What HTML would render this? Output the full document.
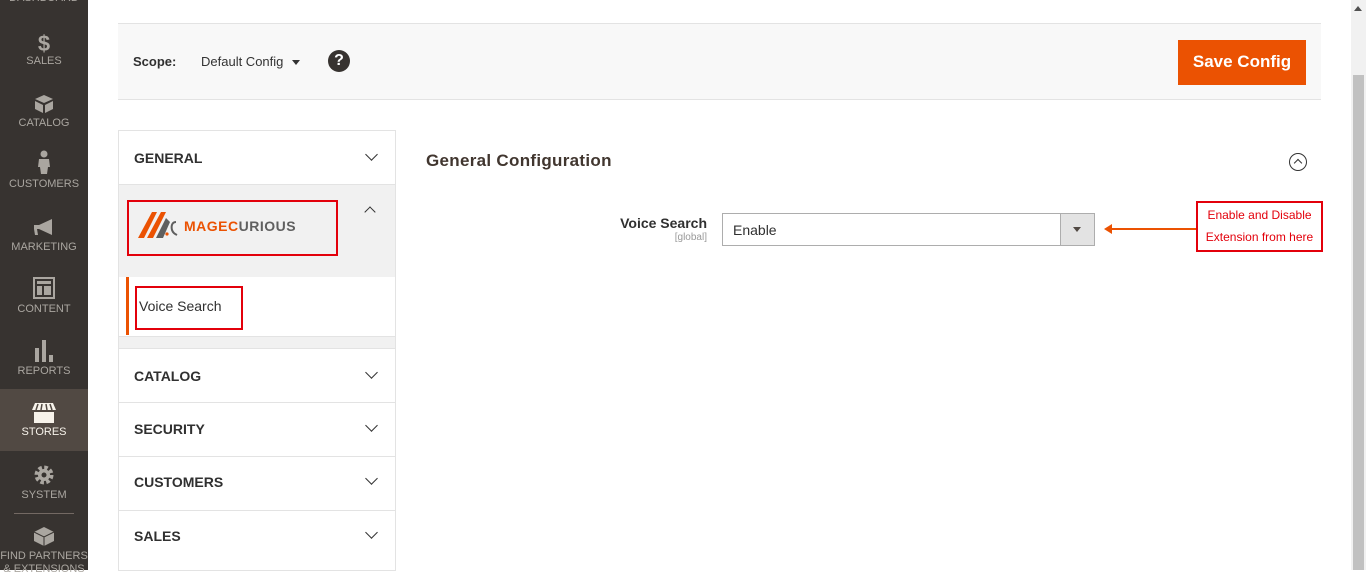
<!DOCTYPE html>
<html><head><meta charset="utf-8"><style>
*{box-sizing:border-box;margin:0;padding:0}
body{width:1366px;height:570px;overflow:hidden;background:#fff;font-family:"Liberation Sans",sans-serif;position:relative;color:#303030}
.side{position:absolute;left:0;top:0;width:88px;height:570px;background:#373330}
.it{position:absolute;left:0;width:88px;text-align:center;color:#aaa6a0;font-size:11px}
.it svg{display:block;margin:0 auto 3px}
.act{background:#514943;color:#f7f3eb}
.abs{position:absolute}
.bar{left:118px;top:23px;width:1203px;height:77px;background:#f8f8f8;border-top:1px solid #e3e3e3;border-bottom:1px solid #e3e3e3}
.nav{left:118px;width:278px;border:1px solid #e3e3e3;border-top:none;background:#fff}
.nav b{position:absolute;left:15px;font-size:14px;color:#303030}
.chev{position:absolute;right:19px;width:9px;height:9px;border-right:1.6px solid #333;border-bottom:1.6px solid #333;transform:rotate(45deg)}
</style></head><body>
<div class="side">
 <div class="it" style="top:-8px">DASHBOARD</div>
 <div class="it" style="top:33px"><div style="font-size:22px;font-weight:bold;color:#aaa6a0;line-height:22px">$</div>SALES</div>
 <div class="it" style="top:94px"><svg width="20" height="20" viewBox="0 0 20 20"><path d="M10 1L19 5 10 9 1 5z M1 7L9 11V19L1 15z M11 11L19 7V15L11 19z" fill="#aaa6a0"/></svg>CATALOG</div>
 <div class="it" style="top:149px"><svg width="14" height="26" viewBox="0 0 14 24"><circle cx="7" cy="4" r="3.5" fill="#aaa6a0"/><path d="M2 9h10l1 8h-2l-1 7H4l-1-7H1z" fill="#aaa6a0"/></svg>CUSTOMERS</div>
 <div class="it" style="top:218px"><svg width="24" height="20" viewBox="0 0 24 18"><path d="M2 6h5l13-6v16L7 10H5l1 6H3l-1-6z" fill="#aaa6a0"/></svg>MARKETING</div>
 <div class="it" style="top:276px"><svg width="22" height="24" viewBox="0 0 22 22"><rect x="1" y="1" width="20" height="20" fill="none" stroke="#aaa6a0" stroke-width="2"/><rect x="4" y="4" width="14" height="3" fill="#aaa6a0"/><rect x="4" y="9" width="5" height="9" fill="#aaa6a0"/><rect x="11" y="9" width="7" height="9" fill="#aaa6a0"/></svg>CONTENT</div>
 <div class="it" style="top:340px"><svg width="20" height="22" viewBox="0 0 20 22"><rect x="1" y="8" width="4" height="14" fill="#aaa6a0"/><rect x="8" y="0" width="4" height="22" fill="#aaa6a0"/><rect x="15" y="15" width="4" height="7" fill="#aaa6a0"/></svg>REPORTS</div>
 <div class="it act" style="top:389px;height:62px;padding-top:14px"><svg width="24" height="20" viewBox="0 0 24 20"><path d="M3 0h18l3 7H0z" fill="#f7f3eb"/><path d="M2 9h20v11H2z" fill="#f7f3eb"/><path d="M6 1l-2 6M10 1l-1 6M14 1l1 6M18 1l2 6" stroke="#514943" stroke-width="1.5"/></svg>STORES</div>
 <div class="it" style="top:464px"><svg width="22" height="22" viewBox="0 0 22 22"><circle cx="11" cy="11" r="7" fill="none" stroke="#aaa6a0" stroke-width="5" stroke-dasharray="3.3 2.2"/><circle cx="11" cy="11" r="6" fill="#aaa6a0"/><circle cx="11" cy="11" r="2.5" fill="#373330"/></svg>SYSTEM</div>
 <div class="abs" style="left:14px;top:513px;width:60px;height:1px;background:#736963"></div>
 <div class="it" style="top:525px;line-height:13px"><svg width="24" height="22" viewBox="0 0 24 22"><path d="M12 2l10 5v9l-10 5-10-5V7z" fill="#aaa6a0"/><path d="M2 7l10 5 10-5M12 12v9" stroke="#373330" stroke-width="1" fill="none"/></svg>FIND PARTNERS<br>&amp; EXTENSIONS</div>
</div>

<div class="abs bar">
 <span class="abs" style="left:15px;top:30px;font-size:13px;font-weight:bold">Scope:</span>
 <span class="abs" style="left:83px;top:30px;font-size:13px;color:#333">Default Config</span>
 <span class="abs" style="left:174px;top:36px;border-left:4px solid transparent;border-right:4px solid transparent;border-top:5px solid #333"></span>
 <span class="abs" style="left:210px;top:26px;width:22px;height:22px;border-radius:50%;background:#373330;color:#fff;font-weight:bold;font-size:16px;text-align:center;line-height:22px">?</span>
 <div class="abs" style="left:1060px;top:16px;width:128px;height:45px;background:#eb5202;color:#fff;font-size:17px;font-weight:bold;text-align:center;line-height:43px">Save Config</div>
</div>

<div class="abs nav" style="top:130px;height:55px;border-top:1px solid #e3e3e3"><b style="top:19px">GENERAL</b><div class="chev" style="top:19px"></div></div>
<div class="abs" style="left:118px;top:184px;width:278px;height:94px;background:#f1f1f1;border:1px solid #e3e3e3"></div>
<div class="abs" style="left:127px;top:200px;width:211px;height:56px;border:2px solid #e3000b"></div>
<svg class="abs" style="left:138px;top:210px" width="40" height="28" viewBox="0 0 40 28"><path d="M0 28L14 2h5L6 28z" fill="#eb5202"/><path d="M9 28L23 2h5L15 28z" fill="#eb5202"/><path d="M18 28l10-20 4 4-7 16z" fill="#5f5f5f"/><circle cx="29" cy="24" r="1.6" fill="#eb5202"/><path d="M38 12c-4 0-5 4-4 8 1 3 3 4 5 5" stroke="#5f5f5f" stroke-width="2" fill="none"/></svg>
<div class="abs" style="left:184px;top:218px;font-size:14px;font-weight:bold;letter-spacing:0.5px;color:#5f5f5f"><span style="color:#eb5202">MAGE</span><span style="color:#eb5202">C</span>URIOUS</div>
<div class="abs" style="left:366px;top:208px;width:8px;height:8px;border-left:1.6px solid #333;border-top:1.6px solid #333;transform:rotate(45deg)"></div>
<div class="abs" style="left:118px;top:277px;width:278px;height:60px;background:#fff;border-left:1px solid #e3e3e3;border-right:1px solid #e3e3e3;border-bottom:1px solid #e3e3e3"></div>
<div class="abs" style="left:126px;top:277px;width:3px;height:58px;background:#eb5202"></div>
<div class="abs" style="left:135px;top:286px;width:108px;height:44px;border:2px solid #e3000b"></div>
<div class="abs" style="left:139px;top:298px;font-size:14px;color:#303030">Voice Search</div>
<div class="abs" style="left:118px;top:336px;width:278px;height:13px;background:#f1f1f1;border:1px solid #e3e3e3"></div>
<div class="abs nav" style="top:348px;height:55px;border-top:1px solid #e3e3e3"><b style="top:19px">CATALOG</b><div class="chev" style="top:19px"></div></div>
<div class="abs nav" style="top:403px;height:54px"><b style="top:18px">SECURITY</b><div class="chev" style="top:18px"></div></div>
<div class="abs nav" style="top:457px;height:54px"><b style="top:17px">CUSTOMERS</b><div class="chev" style="top:17px"></div></div>
<div class="abs nav" style="top:511px;height:60px"><b style="top:17px">SALES</b><div class="chev" style="top:17px"></div></div>

<div class="abs" style="left:426px;top:151px;font-size:17px;font-weight:bold;color:#41362f;letter-spacing:0.3px">General Configuration</div>
<div class="abs" style="left:1289px;top:153px;width:18px;height:18px;border:1.3px solid #333;border-radius:50%"></div>
<div class="abs" style="left:1295px;top:160px;width:6px;height:6px;border-left:1.3px solid #333;border-top:1.3px solid #333;transform:rotate(45deg)"></div>

<div class="abs" style="left:560px;top:215px;width:147px;text-align:right;font-size:14px;font-weight:bold;color:#303030">Voice Search</div>
<div class="abs" style="left:560px;top:232px;width:147px;text-align:right;font-size:10px;color:#999">[global]</div>
<div class="abs" style="left:722px;top:213px;width:373px;height:33px;border:1px solid #adadad;background:#fff">
 <span class="abs" style="left:10px;top:8px;font-size:14px;color:#303030">Enable</span>
 <div class="abs" style="right:0;top:0;width:34px;height:31px;background:#e3e3e3;border-left:1px solid #adadad"></div>
 <span class="abs" style="right:13px;top:13px;border-left:4px solid transparent;border-right:4px solid transparent;border-top:5px solid #514943"></span>
</div>
<div class="abs" style="left:1110px;top:228px;width:88px;height:2px;background:#eb5202"></div>
<span class="abs" style="left:1104px;top:224px;border-top:5px solid transparent;border-bottom:5px solid transparent;border-right:8px solid #eb5202"></span>
<div class="abs" style="left:1196px;top:201px;width:127px;height:51px;border:2px solid #e3000b;color:#e3000b;font-size:12px;text-align:center;line-height:22px;padding-top:1px">Enable and Disable<br>Extension from here</div>

<div class="abs" style="left:1351px;top:0;width:15px;height:570px;background:#f1f1f1"></div>
<span class="abs" style="left:1354px;top:6px;border-left:4px solid transparent;border-right:4px solid transparent;border-bottom:5px solid #505050"></span>
<div class="abs" style="left:1353px;top:75px;width:11px;height:495px;background:#c1c1c1"></div>
</body></html>
